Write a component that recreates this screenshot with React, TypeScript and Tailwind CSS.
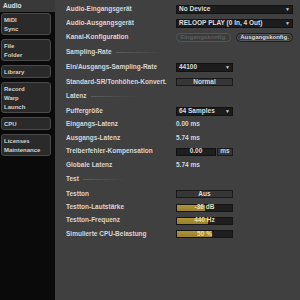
import React from "react";

const font = { fontFamily: '"Liberation Sans", Arial, sans-serif' };

function Group({ items }: { items: string[] }) {
  return (
    <div className="ml-[1px] w-[50px] rounded-[3px] border border-[#4a4a4a] bg-[#2a2a2a] py-[1px]">
      {items.map((t) => (
        <div key={t} className="flex h-[9px] items-center whitespace-nowrap pl-[2px] text-[6px] font-bold leading-none text-[#d2d2d2]">
          {t}
        </div>
      ))}
    </div>
  );
}

function Sidebar() {
  return (
    <div className="flex w-[55px] shrink-0 flex-col bg-[#0a0a0a]">
      <div className="flex h-[12px] items-center bg-[#393939] pl-[3px] text-[6.5px] font-bold leading-none text-[#e0e0e0]">
        Audio
      </div>
      <div className="mt-[1px] flex flex-col gap-[4px]">
        <Group items={["MIDI", "Sync"]} />
        <Group items={["File", "Folder"]} />
        <Group items={["Library"]} />
        <Group items={["Record", "Warp", "Launch"]} />
        <Group items={["CPU"]} />
        <Group items={["Licenses", "Maintenance"]} />
      </div>
    </div>
  );
}

const txt = "whitespace-nowrap text-[6.5px] font-bold leading-none";

function Row({ h, label, children }: { h: string; label: string; children?: React.ReactNode }) {
  return (
    <div className={`flex items-center ${h}`}>
      <div className={`w-[110px] shrink-0 text-[#d6d6d6] ${txt}`}>{label}</div>
      <div className="flex flex-1 items-center">{children}</div>
    </div>
  );
}

function Header({ h, label }: { h: string; label: string }) {
  return (
    <div className={`flex items-center ${h}`}>
      <div className={`text-[#d6d6d6] ${txt}`}>{label}</div>
      <div className="ml-[4px] h-px w-[45px] bg-gradient-to-r from-[#5c5c5c] to-transparent" />
    </div>
  );
}

function Dropdown({ w, text }: { w: string; text: string }) {
  return (
    <div className={`flex h-[9px] items-center justify-between border border-[#121212] bg-[#1c1c1c] pl-[2px] pr-[2px] ${w}`}>
      <span className={`text-[#dcdcdc] ${txt}`}>{text}</span>
      <span className="text-[5px] leading-none text-[#cfcfcf]">▼</span>
    </div>
  );
}

function Button({ text }: { text: string }) {
  return (
    <div className="flex h-[8px] w-[57px] items-center justify-center border border-[#1a1a1a] bg-[#363636]">
      <span className={`text-[#d8d8d8] ${txt}`}>{text}</span>
    </div>
  );
}

function Slider({ pct, value, unit }: { pct: number; value: string; unit: string }) {
  return (
    <div className="relative flex h-[8px] w-[57px] items-center justify-center border border-[#151515] bg-[#1f1f1f]">
      <div
        className="absolute left-0 top-0 h-full bg-gradient-to-b from-[#b09536] to-[#97802c]"
        style={{ width: `${pct}%` }}
      />
      <span className={`relative text-[#e6dcb0] ${txt}`}>
        {value} {unit}
      </span>
    </div>
  );
}

function Main() {
  const val = `text-[#d6d6d6] ${txt}`;
  return (
    <div className="flex flex-1 flex-col bg-[#404040] pl-[11px] pr-[8px] pt-[3px]">
      <Row h="h-[13px]" label="Audio-Eingangsgerät">
        <Dropdown w="w-[117px]" text="No Device" />
      </Row>
      <Row h="h-[14px]" label="Audio-Ausgangsgerät">
        <Dropdown w="w-[117px]" text="RELOOP PLAY (0 In, 4 Out)" />
      </Row>
      <Row h="h-[14px]" label="Kanal-Konfiguration">
        <div className="flex h-[9px] w-[55px] items-center justify-center rounded-full border border-[#555555] bg-[#3b3b3b]">
          <span className="whitespace-nowrap text-[6px] font-bold leading-none text-[#5e5e5e]">Eingangskonfig.</span>
        </div>
        <div className="ml-[5px] flex h-[9px] w-[57px] items-center justify-center rounded-full border border-[#1e1e1e] bg-[#3a3a3a] shadow-[inset_0_0_0_1px_#575757]">
          <span className="whitespace-nowrap text-[6px] font-bold leading-none text-[#dedede]">Ausgangskonfig.</span>
        </div>
      </Row>
      <Header h="h-[16px]" label="Sampling-Rate" />
      <Row h="h-[15px]" label="Ein/Ausgangs-Sampling-Rate">
        <Dropdown w="w-[57px]" text="44100" />
      </Row>
      <Row h="h-[14px]" label="Standard-SR/Tonhöhen-Konvert.">
        <Button text="Normal" />
      </Row>
      <Header h="h-[15px]" label="Latenz" />
      <Row h="h-[14px]" label="Puffergröße">
        <Dropdown w="w-[57px]" text="64 Samples" />
      </Row>
      <Row h="h-[13px]" label="Eingangs-Latenz">
        <span className={val}>0.00 ms</span>
      </Row>
      <Row h="h-[14px]" label="Ausgangs-Latenz">
        <span className={val}>5.74 ms</span>
      </Row>
      <Row h="h-[13px]" label="Treiberfehler-Kompensation">
        <div className="flex h-[8px] w-[40px] items-center justify-center border border-[#121212] bg-[#1e1e1e]">
          <span className={`text-[#dcdcdc] ${txt}`}>0.00</span>
        </div>
        <div className="ml-[1px] flex h-[8px] w-[16px] items-center justify-center border border-[#1a1a1a] bg-[#363636]">
          <span className={`text-[#d0d0d0] ${txt}`}>ms</span>
        </div>
      </Row>
      <Row h="h-[14px]" label="Globale Latenz">
        <span className={val}>5.74 ms</span>
      </Row>
      <Header h="h-[15px]" label="Test" />
      <Row h="h-[14px]" label="Testton">
        <Button text="Aus" />
      </Row>
      <Row h="h-[13px]" label="Testton-Lautstärke">
        <Slider pct={50} value="-36" unit="dB" />
      </Row>
      <Row h="h-[13px]" label="Testton-Frequenz">
        <Slider pct={56} value="440" unit="Hz" />
      </Row>
      <Row h="h-[14px]" label="Simulierte CPU-Belastung">
        <Slider pct={63} value="50" unit="%" />
      </Row>
    </div>
  );
}

export default function App() {
  return (
    <div className="flex h-[300px] w-[300px] overflow-hidden bg-black" style={font}>
      <Sidebar />
      <Main />
    </div>
  );
}
